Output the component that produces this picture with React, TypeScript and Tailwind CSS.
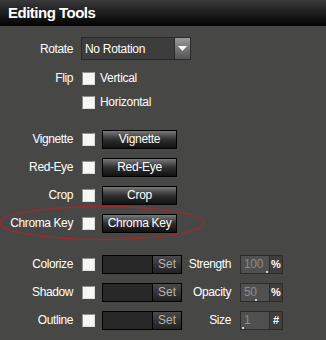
import React from 'react';

const font = { fontFamily: '"Liberation Sans", Arial, sans-serif' };

function Checkbox() {
  return (
    <div className="w-[13px] h-[13px] shrink-0 bg-[#f6f6f2] border border-t-[#8e8e8e] border-l-[#8e8e8e] border-b-[#dcdcdc] border-r-[#dcdcdc]" />
  );
}

function Label({ text }: { text: string }) {
  return <div className="w-[73px] shrink-0 text-right text-white text-[12px] tracking-[-0.4px]">{text}</div>;
}

function ToolRow({ label }: { label: string }) {
  return (
    <div className="flex items-center h-[28px]">
      <Label text={label} />
      <div className="ml-[9px]">
        <Checkbox />
      </div>
      <button className="ml-[7px] w-[75px] h-[19px] border border-black bg-linear-to-b from-[#7a7a7a] via-[#2f2f2f] to-[#121212] text-white text-[12px] tracking-[-0.3px] flex items-center justify-center">
        {label}
      </button>
    </div>
  );
}

type ColorRowProps = { label: string; param: string; value: string; unit: string; tick: string };

function ColorRow({ label, param, value, unit, tick }: ColorRowProps) {
  return (
    <div className="flex items-center h-[28px]">
      <Label text={label} />
      <div className="ml-[9px]">
        <Checkbox />
      </div>
      {/* colour swatch + set */}
      <div className="ml-[7px] w-[80px] h-[19px] flex border border-black">
        <div className="flex-1 bg-[#282828]" />
        <div className="w-[29px] border-l border-black bg-linear-to-b from-[#4a4a4a] to-[#222] text-[#b4b4b4] text-[12px] flex items-center justify-center">
          Set
        </div>
      </div>
      <div className="w-[49px] shrink-0 text-right text-white text-[12px] tracking-[-0.4px]">{param}</div>
      <div className="ml-[9px] flex h-[19px] border border-[#2c2c2c]">
        <div className="relative w-[28px] bg-[#505050] text-[#8c8c8c] text-[12px] tracking-[-0.3px] pl-[3px] leading-[17px]">
          {value}
          <div className={`absolute bottom-0 w-[2px] h-[2px] bg-[#d0d0d0] ${tick}`} />
        </div>
        <div className="w-[13px] border-l border-[#2c2c2c] bg-[#3e3e3e] text-white font-bold text-[11px] flex items-center justify-center">
          {unit}
        </div>
      </div>
    </div>
  );
}

export default function App() {
  return (
    <div className="relative w-[326px] h-[340px] bg-[#474845] overflow-hidden" style={font}>
      {/* Header */}
      <div className="h-[26px] bg-linear-to-b from-[#3a3a3a] to-[#050505] flex items-center pl-[8px]">
        <span className="text-white font-bold text-[15px] tracking-[-0.5px]">Editing Tools</span>
      </div>

      <div className="pt-[11px]">
        {/* Rotate */}
        <div className="flex items-center h-[23px]">
          <Label text="Rotate" />
          <div className="ml-[8px] w-[110px] h-[23px] flex border border-[#2a2a2a] bg-[#3d3d3d]">
            <div className="flex-1 text-white text-[12px] tracking-[-0.3px] pl-[3px] flex items-center">No Rotation</div>
            <div className="w-[16px] border-l border-[#2a2a2a] bg-linear-to-b from-[#9a9a9a] to-[#555] flex items-center justify-center">
              <svg width="9" height="5" viewBox="0 0 9 5">
                <path d="M0 0h9L4.5 5z" fill="#fff" />
              </svg>
            </div>
          </div>
        </div>

        {/* Flip */}
        <div className="mt-[6px] flex items-center h-[24px]">
          <Label text="Flip" />
          <div className="ml-[9px]">
            <Checkbox />
          </div>
          <span className="ml-[5px] text-white text-[12px] tracking-[-0.3px]">Vertical</span>
        </div>
        <div className="flex items-center h-[24px]">
          <div className="w-[73px]" />
          <div className="ml-[9px]">
            <Checkbox />
          </div>
          <span className="ml-[5px] text-white text-[12px] tracking-[-0.3px]">Horizontal</span>
        </div>

        <div className="mt-[11px]">
          <ToolRow label="Vignette" />
          <ToolRow label="Red-Eye" />
          <ToolRow label="Crop" />
          <ToolRow label="Chroma Key" />
        </div>

        <div className="mt-[13px]">
          <ColorRow label="Colorize" param="Strength" value="100" unit="%" tick="right-[1px]" />
          <ColorRow label="Shadow" param="Opacity" value="50" unit="%" tick="left-[14px]" />
          <ColorRow label="Outline" param="Size" value="1" unit="#" tick="left-[1px]" />
        </div>
      </div>

      {/* highlight ellipse */}
      <svg className="absolute left-0 top-[204px]" width="210" height="38" viewBox="0 0 210 38">
        <ellipse cx="102" cy="19" rx="102" ry="16.5" fill="none" stroke="#9c2a2f" strokeWidth="1.4" />
      </svg>
    </div>
  );
}
